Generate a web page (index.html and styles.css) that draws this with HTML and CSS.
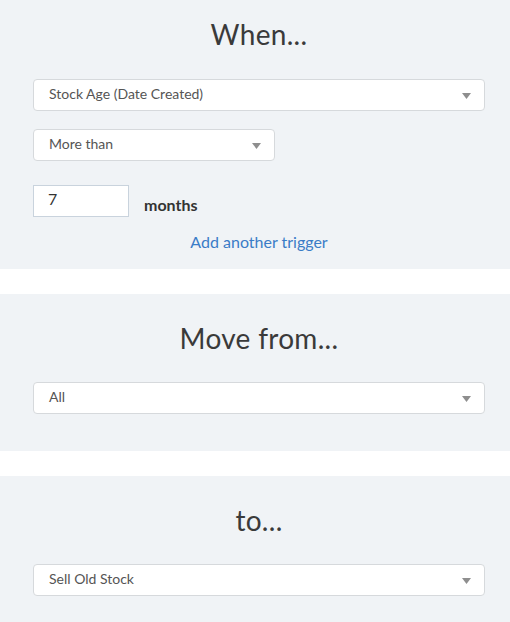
FILE: index.html
```html
<!DOCTYPE html>
<html lang="en">
<head>
  <meta charset="UTF-8">
  <title>Stock Rule</title>
  <link rel="stylesheet" href="styles.css">
</head>
<body>

  <section class="panel panel-first">
    <h1>When...</h1>

    <div class="select">
      <span>Stock Age (Date Created)</span>
      <svg class="caret" width="9" height="6" viewBox="0 0 9 6"><path d="M0 0H9L4.5 6Z"/></svg>
    </div>

    <div class="select select-small">
      <span>More than</span>
      <svg class="caret" width="9" height="6" viewBox="0 0 9 6"><path d="M0 0H9L4.5 6Z"/></svg>
    </div>

    <div class="amount">
      <div class="number">7</div>
      <span class="unit">months</span>
    </div>

    <a class="add-link" href="#">Add another trigger</a>
  </section>

  <section class="panel">
    <h1>Move from...</h1>
    <div class="select">
      <span>All</span>
      <svg class="caret" width="9" height="6" viewBox="0 0 9 6"><path d="M0 0H9L4.5 6Z"/></svg>
    </div>
  </section>

  <section class="panel">
    <h1>to...</h1>
    <div class="select">
      <span>Sell Old Stock</span>
      <svg class="caret" width="9" height="6" viewBox="0 0 9 6"><path d="M0 0H9L4.5 6Z"/></svg>
    </div>
  </section>

</body>
</html>
```

FILE: styles.css
```css
body {
  margin: 0;
  background: #fff;
  font-family: Lato, "Open Sans", sans-serif;
  color: #333;
}
.panel {
  background: #f0f3f6;
  padding: 27px 25px 37px 33px;
  margin-bottom: 25px;
}
.panel-first {
  padding-top: 17px;
  padding-bottom: 17px;
}
h1 {
  margin: 0 0 27px;
  font-size: 28px;
  line-height: 34px;
  font-weight: 400;
  text-align: center;
  color: #3a3a3a;
  letter-spacing: 0.3px;
}
.panel-first h1 {
  margin-bottom: 28px;
}
.select {
  display: flex;
  align-items: center;
  justify-content: space-between;
  height: 32px;
  box-sizing: border-box;
  padding: 0 13px 3px 15px;
  background: #fff;
  border: 1px solid #d6d9dc;
  border-radius: 4px;
  font-size: 14px;
  color: #555;
}
.select-small {
  width: 242px;
  margin-top: 18px;
}
.caret {
  fill: #8e8e8e;
  margin-top: 5px;
}
.amount {
  display: flex;
  align-items: center;
  margin-top: 24px;
}
.number {
  width: 96px;
  height: 32px;
  box-sizing: border-box;
  padding: 0 14px;
  line-height: 26px;
  background: #fff;
  border: 1px solid #c9d3dd;
  font-size: 16px;
  color: #333;
}
.unit {
  margin-left: 15px;
  margin-top: 7px;
  font-size: 16px;
  font-weight: 700;
  color: #333;
}
.add-link {
  display: block;
  margin-top: 15px;
  line-height: 20px;
  text-align: center;
  font-size: 16px;
  color: #3a7cc7;
  text-decoration: none;
}
```
